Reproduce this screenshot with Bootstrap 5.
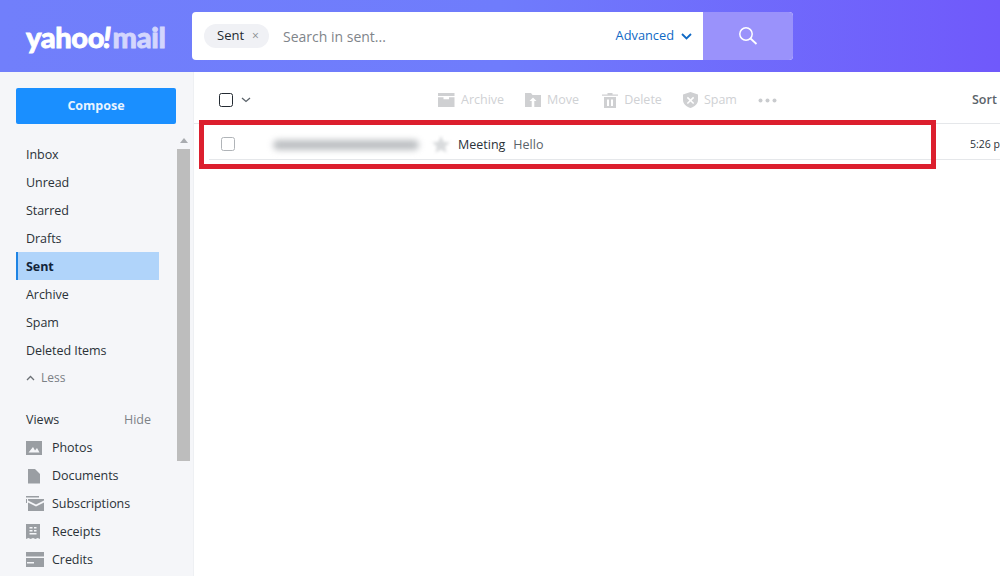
<!DOCTYPE html>
<html lang="en">
<head>
<meta charset="utf-8">
<title>Yahoo Mail</title>
<link href="https://cdn.jsdelivr.net/npm/bootstrap@5.3.0/dist/css/bootstrap.min.css" rel="stylesheet">
<style>
html,body{height:576px;overflow:hidden}
body{font-family:"Open Sans","Noto Sans",sans-serif;font-size:12.5px;color:#232a31;background:#fff;width:1000px}
.ym-top{height:72px;background:linear-gradient(90deg,#717ffb 0%,#6f7cfc 50%,#7059fb 100%);flex:none}
.ym-logo{width:192px;height:72px;padding-left:26px;font-family:Lato,sans-serif;font-weight:900;font-size:29px;letter-spacing:-.35px;color:#fff;line-height:1;-webkit-text-stroke:.8px #fff}
.ym-logo i{font-style:italic;margin:0 2px 0 -1px}
.ym-logo span{color:#d3d6fd;-webkit-text-stroke:.8px #d3d6fd}
.ym-search{margin-top:12px;height:48px;width:601px;border-radius:4px;overflow:hidden;background:#fff}
.ym-pill{height:24px;width:65px;margin-left:12px;border-radius:12px;background:#f0f1f5;padding-left:13px;font-size:13px;color:#232a31}
.ym-pill em{font-style:normal;color:#878c91;margin-left:8px;font-size:12px}
.ym-ph{margin-left:14px;font-size:14px;color:#7f858a}
.ym-adv{color:#0f69c5;font-size:12.8px;margin-right:11px;gap:7px}
.ym-go{width:90px;background:#9a92fb}
.ym-side{width:194px;flex:none;background:#f5f6f9;position:relative;overflow:hidden;border-right:1px solid #eef0f3}
.ym-compose{display:block;margin:16px 0 0 16px;width:160px;height:36px;border:0;border-radius:2px;background:#1a8fff;color:#e8f4ff;font-weight:700;font-size:12.5px;padding:0}
.ym-list{margin:16px 0 0 16px;width:143px}
.ym-it{height:28px;padding:2px 0 0 10px;font-size:12.5px;color:#2b3238;letter-spacing:-.05px}
.ym-on{background:#b0d4fa;border-left:2px solid #1f84e4;padding-left:8px;font-weight:700;color:#13253a}
.ym-less{height:26px;padding:2px 0 0 10px;color:#7b8085;gap:6px;font-size:12px}
.ym-views{margin:15px 0 0;padding:2px 8px 0 10px;height:28px;color:#2b3238}
.ym-views span{color:#7d8287}
.ym-ic{width:20px;margin-right:6px;flex:none;color:#9a9ea3}
.ym-rail{position:absolute;left:177px;top:63px;width:13px;height:400px}
.ym-arrow{width:0;height:0;margin:3px auto 6px;border:4px solid transparent;border-top:0;border-bottom:5px solid #a9acb0}
.ym-thumb{height:312px;background:#bdbdbd}
.ym-main{flex:1;min-width:0;position:relative;overflow:hidden}
.ym-tools{height:51px;padding:5px 0 0 25px}
.ym-box{width:14px;height:14px;border:1.5px solid #232a31;border-radius:2.5px;background:#fff;flex:none}
.ym-act{color:#cfd1d4;font-size:12.5px;gap:6px}
.ym-act svg{color:#cfd0d2}
.ym-acts{margin-left:187px;gap:21px}
.ym-wide{margin-left:2px}
.ym-sort{position:absolute;left:778px;top:19px;color:#5b636a;font-size:12.5px;font-weight:600}
.ym-row{height:36px;margin-left:15px;padding-top:4px;border-bottom:1px solid #e5e7ea;position:relative}
.ym-hr{height:1px;background:#e5e7ea}
.ym-box2{width:14px;height:14px;border:1.5px solid #b0b4b8;border-radius:2.500px;margin-left:12px;flex:none}
.ym-blur{width:146px;height:10px;margin:2px 0 0 38px;flex:none;background:#bcbfc2;border-radius:5px;filter:blur(3px)}
.ym-star{margin:2px 0 0 13px;flex:none;filter:blur(1.5px)}
.ym-subj{margin-left:8px;padding-top:3px;color:#2b3238;font-size:12.5px}
.ym-prev{margin-left:8px;padding-top:3px;color:#5b636a;font-size:12.5px}
.ym-time{position:absolute;left:761px;top:13px;font-size:10.5px;color:#2b3238;white-space:nowrap}
.ym-mark{position:absolute;left:199px;top:120px;width:737px;height:49px;border:5px solid #dc1f2e;pointer-events:none}
</style>
</head>
<body class="d-flex flex-column">
<header class="ym-top d-flex">
  <div class="ym-logo d-flex align-items-center">yahoo<i>!</i><span>mail</span></div>
  <div class="ym-search d-flex align-items-center">
    <div class="ym-pill d-flex align-items-center">Sent<em>×</em></div>
    <div class="ym-ph flex-grow-1">Search in sent...</div>
    <div class="ym-adv d-flex align-items-center">Advanced
      <svg width="11" height="7" viewBox="0 0 11 7"><path d="M1 1l4.500 4.500L10 1" fill="none" stroke="#0f69c5" stroke-width="1.800"/></svg>
    </div>
    <div class="ym-go align-self-stretch d-flex align-items-center justify-content-center">
      <svg width="20" height="20" viewBox="0 0 20 20"><circle cx="8" cy="8" r="6.200" fill="none" stroke="#fff" stroke-width="1.500"/><path d="M12.500 12.500L18.500 18" stroke="#fff" stroke-width="1.800"/></svg>
    </div>
  </div>
</header>
<div class="d-flex flex-grow-1" style="min-height:0">
  <aside class="ym-side">
    <button class="ym-compose" type="button">Compose</button>
    <div class="ym-list">
      <div class="ym-it d-flex align-items-center">Inbox</div>
      <div class="ym-it d-flex align-items-center">Unread</div>
      <div class="ym-it d-flex align-items-center">Starred</div>
      <div class="ym-it d-flex align-items-center">Drafts</div>
      <div class="ym-it ym-on d-flex align-items-center">Sent</div>
      <div class="ym-it d-flex align-items-center">Archive</div>
      <div class="ym-it d-flex align-items-center">Spam</div>
      <div class="ym-it d-flex align-items-center">Deleted Items</div>
      <div class="ym-less d-flex align-items-center">
        <svg width="9" height="6" viewBox="0 0 9 6"><path d="M1 5l3.500-3.500L8 5" fill="none" stroke="#6b7075" stroke-width="1.300"/></svg>Less</div>
      <div class="ym-views d-flex align-items-center justify-content-between">Views<span>Hide</span></div>
      <div class="ym-it d-flex align-items-center">
        <svg class="ym-ic" width="20" height="16" viewBox="0 0 20 16"><path fill="currentColor" fill-rule="evenodd" d="M0 1h16v14H0zM2.500 12.500h11L11 8l-2 2.500L7 7z"/></svg>Photos</div>
      <div class="ym-it d-flex align-items-center">
        <svg class="ym-ic" width="20" height="16" viewBox="0 0 20 16"><path fill="currentColor" d="M2 1h7l5 5v9.500H2z"/></svg>Documents</div>
      <div class="ym-it d-flex align-items-center">
        <svg class="ym-ic" width="20" height="16" viewBox="0 0 20 16"><path fill="currentColor" d="M-2 0h15v1.500H-2zM-2 3h3v4h-3zM2 3h16v1.500L10 8.500 2 4.500zM2 6.500l8 4 8-4V15H2z"/></svg>Subscriptions</div>
      <div class="ym-it d-flex align-items-center">
        <svg class="ym-ic" width="20" height="16" viewBox="0 0 20 16"><path fill="currentColor" fill-rule="evenodd" d="M0 0h14v15l-2.300-1-2.300 1-2.400-1-2.300 1-2.300-1L0 15zM3.500 3v1.500h3V3zM8 3v1.500h2.500V3zM3.500 6v1.500h3V6zM8 6v1.500h2.500V6zM3.500 9v1.500h7V9z"/></svg>Receipts</div>
      <div class="ym-it d-flex align-items-center">
        <svg class="ym-ic" width="20" height="16" viewBox="0 0 20 16"><path fill="currentColor" fill-rule="evenodd" d="M-2 0h20v4.500H-2zM-2 6h20v9H-2zM1 10v1.500h7V10z"/></svg>Credits</div>
    </div>
    <div class="ym-rail"><div class="ym-arrow"></div><div class="ym-thumb"></div></div>
  </aside>
  <main class="ym-main">
    <div class="ym-tools d-flex align-items-center">
      <span class="ym-box"></span>
      <svg class="ms-2" width="10" height="6" viewBox="0 0 10 6"><path d="M1 1l4 3.500L9 1" fill="none" stroke="#5b636a" stroke-width="1.300"/></svg>
      <div class="ym-acts d-flex align-items-center">
        <div class="ym-act d-flex align-items-center"><svg width="17" height="14" viewBox="0 0 17 14"><path fill="currentColor" d="M0 0h16.500v3H0zM0 4.200h5.500v2h5.500v-2h5.500V14H0z"/></svg>Archive</div>
        <div class="ym-act d-flex align-items-center"><svg width="16" height="14" viewBox="0 0 16 14"><path fill="currentColor" fill-rule="evenodd" d="M0 0h6l1.500 2H16v12H0zM8 4.500L4.500 8h2.200v6h2.600V8h2.200z"/></svg>Move</div>
        <div class="ym-act ym-wide d-flex align-items-center"><svg width="16" height="15" viewBox="0 0 16 15"><path fill="currentColor" fill-rule="evenodd" d="M0 1.500h5.500V0h5v1.500H16v1.200H0zM2 4h12v11H2zM5 6.500V13h2V6.500zM9 6.500V13h2V6.500z"/></svg>Delete</div>
        <div class="ym-act d-flex align-items-center"><svg width="15" height="16" viewBox="0 0 15 16"><path fill="currentColor" fill-rule="evenodd" d="M7.500 0L15 2.500V8c0 4-3.500 6.800-7.500 8C3.500 14.800 0 12 0 8V2.500zM4.900 4.800L3.800 5.900l2.600 2.500-2.600 2.500 1.100 1.100 2.600-2.500 2.600 2.500 1.100-1.100-2.600-2.500 2.600-2.500-1.100-1.100-2.600 2.500z"/></svg>Spam</div>
        <svg width="19" height="5" viewBox="0 0 19 5"><g fill="#c9cbce"><circle cx="2.500" cy="2.500" r="2"/><circle cx="9.500" cy="2.500" r="2"/><circle cx="16.500" cy="2.500" r="2"/></g></svg>
      </div>
    </div>
    <div class="ym-sort">Sort</div>
    <div class="ym-hr"></div>
    <div class="ym-row d-flex align-items-center">
      <span class="ym-box2"></span>
      <span class="ym-blur"></span>
      <svg class="ym-star" width="18" height="17" viewBox="0 0 18 17"><path fill="#d9dbdd" d="M9 0l2.600 5.700 6.200.7-4.600 4.200 1.300 6.100L9 13.600l-5.500 3.100 1.300-6.100L.2 6.400l6.200-.7z"/></svg>
      <span class="ym-subj">Meeting</span>
      <span class="ym-prev">Hello</span>
      <span class="ym-time">5:26 pm</span>
    </div>
  </main>
</div>
<div class="ym-mark"></div>
</body>
</html>
